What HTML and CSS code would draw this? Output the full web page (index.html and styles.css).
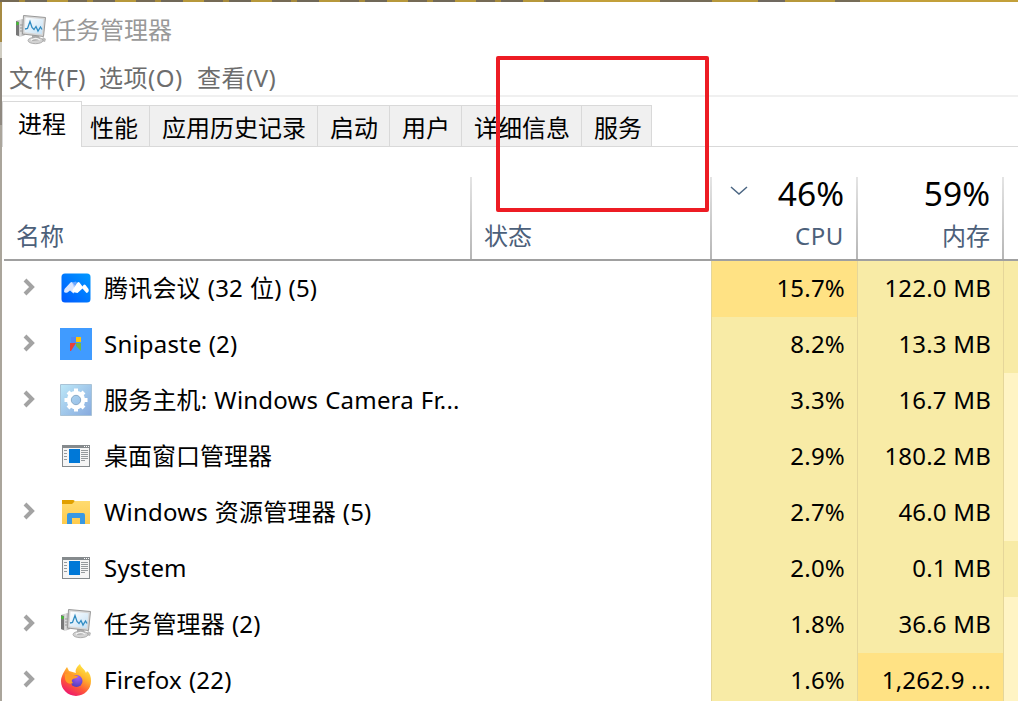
FILE: index.html
```html
<!DOCTYPE html>
<html lang="zh-CN">
<head>
<meta charset="utf-8">
<title>任务管理器</title>
<link rel="stylesheet" href="styles.css">
</head>
<body>
<svg class="defs" width="0" height="0" aria-hidden="true">
  <defs>
    <linearGradient id="scr" x1="0" y1="0" x2="1" y2="1"><stop offset="0" stop-color="#fff"/><stop offset="1" stop-color="#c4e0f4"/></linearGradient>
    <linearGradient id="metal" x1="0" y1="0" x2="1" y2="0"><stop offset="0" stop-color="#a5a5a5"/><stop offset=".5" stop-color="#ddd"/><stop offset="1" stop-color="#999"/></linearGradient>
    <linearGradient id="meet" x1="0" y1="1" x2="1" y2="0"><stop offset="0" stop-color="#0059ff"/><stop offset="1" stop-color="#0099ff"/></linearGradient>
    <linearGradient id="svc" x1="0" y1="0" x2="1" y2="1"><stop offset="0" stop-color="#bde8f8"/><stop offset="1" stop-color="#86a9de"/></linearGradient>
    <linearGradient id="fold" x1="0" y1="0" x2="0" y2="1"><stop offset="0" stop-color="#ffdb70"/><stop offset="1" stop-color="#ffcb4c"/></linearGradient>
    <linearGradient id="fox" x1=".8" y1="0" x2=".25" y2="1"><stop offset="0" stop-color="#fff04a"/><stop offset=".35" stop-color="#ffb52b"/><stop offset=".65" stop-color="#ff5a36"/><stop offset="1" stop-color="#ec1075"/></linearGradient>
    <radialGradient id="globe" cx=".6" cy=".2" r=".9"><stop offset="0" stop-color="#a45cf5"/><stop offset="1" stop-color="#4a3bb5"/></radialGradient>
    <symbol id="taskmgr" viewBox="0 0 32 32">
      <path d="M1 7l6-2 3 1v15l-5 2-4-2z" fill="url(#metal)"/>
      <path d="M1 7l3 1v14l-3-1z" fill="#777"/>
      <path d="M5 11h3M5 14h3M5 17h3" stroke="#999"/>
      <rect x="1.500" y="8" width="2" height="3" fill="#3fc52d"/>
      <path d="M28 23l3 2-1 3-4-1z" fill="#bbb"/>
      <ellipse cx="20.500" cy="26.500" rx="7.500" ry="3.200" fill="#d2d2d2" stroke="#a0a0a0" stroke-width=".8"/>
      <path d="M17 21h7l1 5-8 1z" fill="#aaa"/>
      <path d="M16 26q5-3 9 0" stroke="#f2f2f2" stroke-width="1.500" fill="none"/>
      <path d="M8.500 1.500l22 2-2 19-21-2.500z" fill="#d8d8d8" stroke="#999" stroke-width="1"/>
      <path d="M10.500 3.500l18 1.700-1.700 15-17.300-2z" fill="url(#scr)"/>
      <path d="M10 15l2.500-.5 2.500-7 2 6 2 2 2-3 2 4.500 2.500-4 1.500 2.500" stroke="#2f8bc2" stroke-width="1.300" fill="none"/>
    </symbol>
    <symbol id="window" viewBox="0 0 28 22">
      <rect width="28" height="22" fill="#858a8d"/><rect x="1" y="3" width="26" height="18" fill="#f5f5f5"/>
      <rect x="7" y="4" width="11" height="14" fill="#0078d7"/>
      <path d="M2 5.500h3M2 8.500h3M2 11.500h3M2 14.500h3M19 5.500h7M19 7.500h7M19 9.500h7M19 11.500h7M19 13.500h7M19 15.500h4" stroke="#959a9d"/>
      <path d="M22 1.500h1M24 1.500h1M26 1.500h1" stroke="#fff"/>
    </symbol>
    <symbol id="chev" viewBox="0 0 12 18"><path d="M2 2l7 7-7 7" fill="none" stroke="#a3a3a3" stroke-width="4"/></symbol>
  </defs>
</svg>
<div class="desktop">
<main class="window">
  <header class="titlebar"><svg width="32" height="32"><use href="#taskmgr"/></svg><span>任务管理器</span></header>
  <nav class="menu"><span class="m-file">文件(F)</span><span class="m-opt">选项(O)</span><span class="m-view">查看(V)</span></nav>
  <div class="tabs">
    <div class="tab active">进程</div><div class="tab t-perf">性能</div><div class="tab t-hist">应用历史记录</div><div class="tab t-start">启动</div><div class="tab t-user">用户</div><div class="tab t-detail">详细信息</div><div class="tab t-svc">服务</div>
  </div>
  <section class="grid head">
    <div class="hcell h-name">名称</div>
    <div class="hcell h-status">状态</div>
    <div class="hcell num"><svg class="sort" width="18" height="12" viewBox="0 0 18 12"><path d="M1 2l8 7 8-7" fill="none" stroke="#4b6683" stroke-width="1.5"/></svg><b>46%</b><span class="cpu">CPU</span></div>
    <div class="hcell num"><b>59%</b><span>内存</span></div>
  </section>
  <section class="rows">
    <div class="grid row"><div class="name"><svg class="chev"><use href="#chev"/></svg><svg class="ico" viewBox="0 0 32 32"><rect x="1.500" y="1.500" width="29" height="29" rx="3.500" fill="url(#meet)"/><path d="M4.500 17l6-6.500q1-1 2 0l4 5-3 6-3.500-3-2.500 2q-3 1-3.500-1z" fill="#dbe6ff"/><path d="M12 10.500l4-1 2 3-3 5z" fill="#8fb6ff" opacity=".7"/><path d="M12.500 18l5-7.500q1-1 2 0l3 4 1-1.500q1-1 2 0l3 4q1 3-2 4l-4-4.500-5 4.500-5-1z" fill="#fff"/></svg><span class="label">腾讯会议 (32 位) (5)</span></div><div></div><div class="v hot">15.7%</div><div class="v">122.0 MB</div><div class="v"></div></div>
    <div class="grid row"><div class="name"><svg class="chev"><use href="#chev"/></svg><svg class="ico" viewBox="0 0 32 32"><path fill="#409bff" d="M0 0h32v32H0z"/><path fill="#5087f5" d="M11 9h5v6h-5z"/><path fill="#ffc107" d="M16 9h5v5h-5z"/><path fill="#e8403b" d="M10 15h6l-5 8h-1z"/><path fill="#70b84b" d="M16 15h5v8l-5-5z"/></svg><span class="label">Snipaste (2)</span></div><div></div><div class="v">8.2%</div><div class="v">13.3 MB</div><div class="v"></div></div>
    <div class="grid row"><div class="name"><svg class="chev"><use href="#chev"/></svg><svg class="ico" viewBox="0 0 32 32"><path fill="url(#svc)" stroke="#a9c3d7" d="M.5.5h31v31H.5z"/><circle cx="16" cy="16" r="7" fill="none" stroke="#fff" stroke-width="4.500"/><g stroke="#fff" stroke-width="4"><path d="M16 4.500v4M16 23.500v4M4.500 16h4M23.500 16h4M8 8l3 3M21 21l3 3M24 8l-3 3M11 21l-3 3"/></g><circle cx="16" cy="16" r="4.700" fill="none" stroke="#7a9dbc" stroke-width=".8"/></svg><span class="label">服务主机: Windows Camera Fr...</span></div><div></div><div class="v">3.3%</div><div class="v">16.7 MB</div><div class="v pale"></div></div>
    <div class="grid row"><div class="name"><i class="chev"></i><svg class="ico win"><use href="#window"/></svg><span>桌面窗口管理器</span></div><div></div><div class="v">2.9%</div><div class="v">180.2 MB</div><div class="v pale"></div></div>
    <div class="grid row"><div class="name"><svg class="chev"><use href="#chev"/></svg><svg class="ico" viewBox="0 0 32 32"><path d="M2 4h11q2 0 2 3l-2 2H2z" fill="#e1a000"/><path d="M2 8h10l3-3h15v23H2z" fill="url(#fold)"/><path d="M7 28V19q0-2 2-2h14q2 0 2 2v9h-5v-6h-8v6z" fill="#3898e2"/></svg><span class="label">Windows 资源管理器 (5)</span></div><div></div><div class="v">2.7%</div><div class="v">46.0 MB</div><div class="v pale"></div></div>
    <div class="grid row"><div class="name"><i class="chev"></i><svg class="ico win"><use href="#window"/></svg><span class="label">System</span></div><div></div><div class="v">2.0%</div><div class="v">0.1 MB</div><div class="v"></div></div>
    <div class="grid row"><div class="name"><svg class="chev"><use href="#chev"/></svg><svg class="ico"><use href="#taskmgr"/></svg><span class="label">任务管理器 (2)</span></div><div></div><div class="v">1.8%</div><div class="v">36.6 MB</div><div class="v pale"></div></div>
    <div class="grid row"><div class="name"><svg class="chev"><use href="#chev"/></svg><svg class="ico" viewBox="0 0 32 32"><path d="M20 0c-4 3-5 7-4 9l-7-2-2-4c-2 3-6 9-6 14a15 15 0 0 0 30 0c0-4-1-8-4-10l-1 2c-1-4-5-5-6-9z" fill="url(#fox)"/><circle cx="16.500" cy="17" r="6" fill="url(#globe)"/><path d="M5 10l4-1 3 2 6 1c-1 3-4 2-5 3-2 1-1 3 0 4-4 2-8-1-8-5z" fill="#ff9c26"/></svg><span class="label">Firefox (22)</span></div><div></div><div class="v">1.6%</div><div class="v hot">1,262.9 ...</div><div class="v pale"></div></div>
  </section>
</main>
<div class="marker"></div>
</div>
</body>
</html>
```
FILE: styles.css
```css
* { box-sizing: border-box; }
body { margin: 0; overflow: hidden; font: 24px/32px "Noto Sans", "Noto Sans CJK SC", sans-serif; color: #000; }
.defs { position: absolute; }
.desktop {
  position: relative; width: 1018px; height: 701px; padding: 2px 0 0 2px; overflow: hidden;
  background:
    repeating-linear-gradient(90deg, #756a55 0 19px, #a68a3c 19px 25px, #706858 25px 47px, #b7983b 47px 68px) 0 0 / 560px 2px no-repeat,
    linear-gradient(90deg, #c3a03a 0 100px, #756c58 100px 152px, #b7983b 152px 198px, #706960 198px 225px, #b7983b 225px 275px, #756c58 275px 300px, #c3a03a 300px) 560px 0 / 458px 2px no-repeat,
    linear-gradient(#a78b43 0 42px, #d0cdc2 42px 58px, #8f8980 58px 125px, #aaa59b 125px);
}
.window { height: 699px; background: #fff; display: flex; flex-direction: column; }
.window > * { flex-shrink: 0; }
.titlebar { height: 56px; padding: 12px 0 0 13px; display: flex; gap: 5px; color: #999; line-height: 32px; }
.menu { height: 39px; padding: 2px 0 0 7px; display: flex; color: #6d6d6d; line-height: 36px; border-bottom: 2px solid #f0f0f0; }
.m-file { width: 90px; letter-spacing: .4px; }
.m-opt { width: 98px; letter-spacing: .5px; }
.m-view { letter-spacing: .5px; }
.tabs { height: 50px; display: flex; align-items: flex-end; background: linear-gradient(#d9d9d9, #d9d9d9) 0 100% / 100% 1px no-repeat; }
.tab { height: 42px; padding-left: 12px; line-height: 43px; background: #f0f0f0; border: 1px solid #d9d9d9; border-left: 0; }
.tab.active { width: 80px; height: 46px; padding-left: 15px; line-height: 44px; background: #fff; border-left: 1px solid #d9d9d9; border-bottom: 0; }
.t-perf { width: 68px; padding-left: 8px; }
.t-hist { width: 168px; }
.t-start, .t-user { width: 72px; }
.t-detail { width: 120px; }
.t-svc { width: 70px; }
.grid { display: grid; grid-template-columns: 470px 240px 146px 146px 1fr; }
.head { height: 114px; padding-top: 30px; border-bottom: 2px solid #a0a0a0; margin-left: 2px; grid-template: 82px / 468px 240px 146px 146px 1fr; color: #4c607a; }
.hcell { position: relative; border-right: 2px solid; border-image: linear-gradient(#e5e5e5, #b5b5b5) 1; display: flex; flex-direction: column; justify-content: flex-end; padding-bottom: 7px; }
.h-name { padding-left: 12px; }
.h-status { padding-left: 12px; }
.num { align-items: flex-end; padding-right: 12px; }
.num b { font-size: 33.5px; font-weight: 400; line-height: 53px; color: #000; }
.cpu { letter-spacing: .6px; }
.sort { position: absolute; left: 18px; top: 8px; }
.row { height: 56px; line-height: 54px; }
.name { display: flex; align-items: center; white-space: nowrap; padding-left: 21px; }
.name span { margin-bottom: 2px; }
.label { letter-spacing: .2px; word-spacing: .5px; }
.chev { width: 12px; height: 18px; margin: 0 25px 4px 0; flex: none; }
.ico { width: 32px; height: 32px; margin: 0 12px 2px 0; flex: none; }
.win { width: 28px; height: 22px; margin: 0 14px 2px 2px; }
.v { background: #f8eba6; border-left: 1px solid #e5d69a; text-align: right; padding-right: 13px; margin-left: -1px; letter-spacing: .2px; }
.v.hot { background: #ffe284; }
.v.pale { background: #fff4c4; }
.marker { position: absolute; left: 496px; top: 56px; width: 213px; height: 156px; border: 4px solid #ed1c24; border-radius: 2px; }
```
